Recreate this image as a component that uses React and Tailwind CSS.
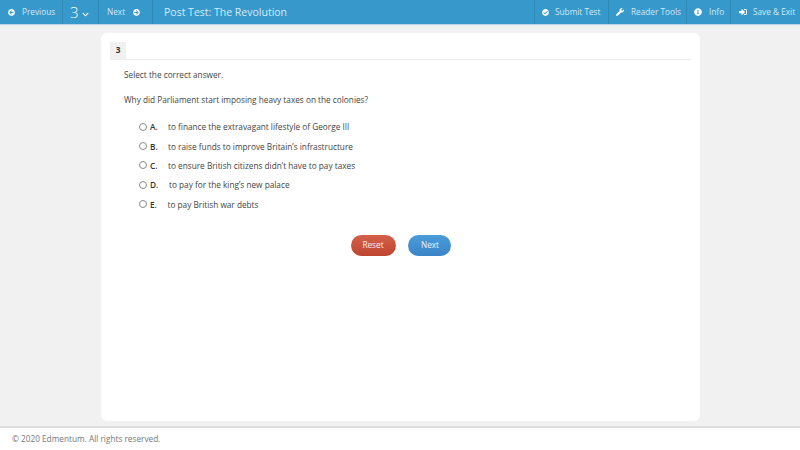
import React from 'react'
import { FaChevronDown, FaArrowCircleRight, FaArrowCircleLeft, FaCheckCircle, FaWrench, FaInfoCircle, FaSignInAlt } from 'react-icons/fa'

const answers = [
  { key: 'A.', text: 'to finance the extravagant lifestyle of George III', gap: 'w-[18px]' },
  { key: 'B.', text: 'to raise funds to improve Britain’s infrastructure', gap: 'w-[18px]' },
  { key: 'C.', text: 'to ensure British citizens didn’t have to pay taxes', gap: 'w-[18px]' },
  { key: 'D.', text: 'to pay for the king’s new palace', gap: 'w-[19px]' },
  { key: 'E.', text: 'to pay British war debts', gap: 'w-[17.5px]' },
]

function NavItem({ icon, label, className }) {
  return (
    <div className={`flex h-full items-center border-l border-[#2f88b6] text-[#d3e9f5] ${className}`}>
      {icon}
      <span>{label}</span>
    </div>
  )
}

export default function App() {
  return (
    <div className="flex h-[450px] w-[800px] flex-col overflow-hidden bg-[#f1f1f1] text-[8.25px] font-['Open_Sans',sans-serif] text-[#444]">
      <header className="flex h-6 shrink-0 items-center bg-[#3698cb] shadow-[0_1px_1px_#bcd6e3] text-[8.25px]">
        <div className="flex h-full w-[62px] items-center gap-[7px] pl-2 text-[#d3e9f5]">
          <FaArrowCircleLeft className="text-[7px] text-white" />
          <span>Previous</span>
        </div>
        <div className="flex h-full w-[36px] items-center gap-[3px] border-l border-[#2f88b6] pl-[7px] text-white">
          <span className="text-[15px] font-light leading-none">3</span>
          <FaChevronDown className="mt-[5px] text-[7px]" />
        </div>
        <div className="flex h-full w-[54px] items-center gap-[8px] border-l border-[#2f88b6] pl-2 text-[#d3e9f5]">
          <span>Next</span>
          <FaArrowCircleRight className="text-[7px] text-white" />
        </div>
        <div className="flex h-full items-center border-l border-[#2f88b6] pl-[11px] pt-[2px] text-[10.5px] text-[#d8ecf7]">
          Post Test: The Revolution
        </div>
        <div className="ml-auto flex h-full items-center">
          <NavItem className="w-[74px] gap-[6px] pl-[7px]" icon={<FaCheckCircle className="text-[7px] text-white" />} label="Submit Test" />
          <NavItem className="w-[78px] gap-[7px] pl-[7px]" icon={<FaWrench className="text-[8px] text-white" />} label="Reader Tools" />
          <NavItem className="w-[44px] gap-[7px] pl-[7px]" icon={<FaInfoCircle className="text-[8px] text-white" />} label="Info" />
          <NavItem className="w-[70px] gap-[6px] pl-2" icon={<FaSignInAlt className="text-[8px] text-white" />} label="Save & Exit" />
        </div>
      </header>

      <main className="flex flex-1 pt-[9px] pb-[5px] pl-[101px]">
        <section className="flex h-[388px] w-[599px] flex-col rounded-[6px] bg-white pl-[9px] pr-[9px]">
          <div className="mt-[9px] flex h-[18px] border-b border-[#ececec]">
            <div className="flex h-[17px] w-4 items-center justify-center bg-[#f1f1f1] text-[8.25px] font-bold text-[#333]">3</div>
          </div>
          <div className="pl-[14px]">
            <p className="mt-[8px] leading-[14px]">Select the correct answer.</p>
            <p className="mt-[11px] leading-[14px]">Why did Parliament start imposing heavy taxes on the colonies?</p>
            <ul className="mt-[13px] flex flex-col gap-[5px] pl-[15px]">
              {answers.map((a) => (
                <li key={a.key} className="flex h-[14.4px] items-center leading-[14px]">
                  <span className="mt-[-1px] h-2 w-2 rounded-full border border-[#8a8a8a] bg-white"></span>
                  <span className="ml-[3px] flex">
                    <span className={`${a.gap} font-semibold text-[#333]`}>{a.key}</span>
                    <span>{a.text}</span>
                  </span>
                </li>
              ))}
            </ul>
          </div>
          <div className="mt-[23px] flex justify-center gap-[12px]">
            <button className="h-[21px] w-[45px] rounded-full bg-gradient-to-b from-[#d4604a] to-[#bf4530] text-[8.25px] text-[#fbeeeb]">Reset</button>
            <button className="h-[21px] w-[43px] rounded-full bg-gradient-to-b from-[#4b9cdb] to-[#3a84c6] pl-[2px] text-[8.25px] text-[#eef6fc]">Next</button>
          </div>
        </section>
      </main>

      <footer className="flex h-[24px] shrink-0 items-center border-t-2 border-[#dedede] bg-white pl-3 text-[8.25px] text-[#777]">
        © 2020 Edmentum. All rights reserved.
      </footer>
    </div>
  )
}
